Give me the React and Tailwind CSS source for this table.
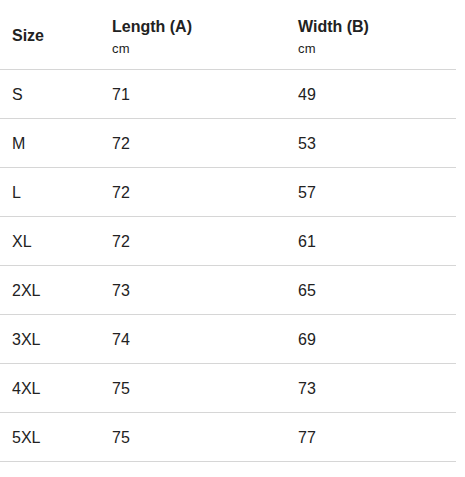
const rows = [
  ['S', '71', '49'],
  ['M', '72', '53'],
  ['L', '72', '57'],
  ['XL', '72', '61'],
  ['2XL', '73', '65'],
  ['3XL', '74', '69'],
  ['4XL', '75', '73'],
  ['5XL', '75', '77'],
];

export default function App() {
  return (
    <div className="bg-white w-[465px] h-[477px] font-['Liberation_Sans',Arial,sans-serif] text-[#222]">
      <div className="w-[456px]">
        <div className="grid grid-cols-[100px_186px_170px] h-[70px] border-b border-[#d6d6d6] items-center">
          <div className="pl-3 pt-0.5 text-[16px] font-bold">Size</div>
          <div className="pl-3 pt-1">
            <div className="text-[16px] font-bold leading-5">Length (A)</div>
            <div className="text-[13px] tracking-[0.3px] leading-4 mt-1">cm</div>
          </div>
          <div className="pl-3 pt-1">
            <div className="text-[16px] font-bold leading-5">Width (B)</div>
            <div className="text-[13px] tracking-[0.3px] leading-4 mt-1">cm</div>
          </div>
        </div>
        {rows.map((r) => (
          <div key={r[0]} className="grid grid-cols-[100px_186px_170px] h-[49px] border-b border-[#d6d6d6] items-center text-[16px] pt-0.5">
            <div className="pl-3">{r[0]}</div>
            <div className="pl-3">{r[1]}</div>
            <div className="pl-3">{r[2]}</div>
          </div>
        ))}
      </div>
    </div>
  );
}
